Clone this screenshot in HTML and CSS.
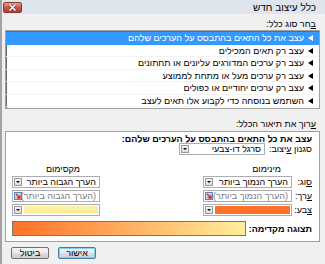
FILE: index.html
```html
<!DOCTYPE html>
<html lang="he">
<head>
    <meta charset="UTF-8">
    <title>כלל עיצוב חדש</title>
    <link rel="stylesheet" href="styles.css">
</head>
<body>
    <div class="dialog" dir="rtl">
        <div class="titlebar">
            <span class="title">כלל עיצוב חדש</span>
            <span class="close-btn">
                <svg width="9" height="7" viewBox="0 0 9 7">
                    <path d="M1.5 0.5 L7.5 6.5 M7.5 0.5 L1.5 6.5" stroke="#6b2a25" stroke-width="2.6"/>
                    <path d="M1.5 0.5 L7.5 6.5 M7.5 0.5 L1.5 6.5" stroke="#fff" stroke-width="1.6"/>
                </svg>
            </span>
        </div>
        <div class="content">
            <div class="section-label"><u>ב</u>חר סוג כלל:</div>
            <ul class="rule-list">
                <li class="selected"><span class="arrow"></span>עצב את כל התאים בהתבסס על הערכים שלהם</li>
                <li><span class="arrow"></span>עצב רק תאים המכילים</li>
                <li><span class="arrow"></span>עצב רק ערכים המדורגים עליונים או תחתונים</li>
                <li><span class="arrow"></span>עצב רק ערכים מעל או מתחת לממוצע</li>
                <li><span class="arrow"></span>עצב רק ערכים יחודיים או כפולים</li>
                <li><span class="arrow"></span>השתמש בנוסחה כדי לקבוע אלו תאים לעצב</li>
            </ul>
            <div class="section-label"><u>ע</u>רוך את תיאור הכלל:</div>
            <div class="desc-box">
                <div class="desc-title">עצב את כל התאים בהתבסס על הערכים שלהם:</div>
                <div class="style-row">
                    <span class="style-label">סגנון <u>ע</u>יצוב:</span>
                    <div class="combo style-combo">
                        <span class="combo-text">סרגל דו-צבעי</span>
                        <span class="drop-btn"></span>
                    </div>
                </div>
                <div class="grid">
                    <span></span>
                    <span class="col-head min-head">מינימום</span>
                    <span></span>
                    <span class="col-head max-head">מקסימום</span>

                    <span class="row-label"><u>ס</u>וג:</span>
                    <div class="combo"><span class="combo-text">הערך הנמוך ביותר</span><span class="drop-btn"></span></div>
                    <span></span>
                    <div class="combo"><span class="combo-text">הערך הגבוה ביותר</span><span class="drop-btn"></span></div>

                    <span class="row-label"><u>ע</u>רך:</span>
                    <div class="combo value-field"><span class="combo-text placeholder">(הערך הנמוך ביותר)</span><span class="ref-btn"><svg width="8" height="8" viewBox="0 0 8 8"><rect x="0.5" y="0.5" width="7" height="7" fill="#dbe8f7" stroke="#5a7fb3"/><path d="M0.5 3 H7.5 M0.5 5.5 H7.5 M3 0.5 V7.5 M5.5 0.5 V7.5" stroke="#8fa9cf" stroke-width="0.6"/><path d="M2 2 L6 6 M6 3.5 V6 H3.5" stroke="#d9261c" stroke-width="1.3" fill="none"/></svg></span></div>
                    <span></span>
                    <div class="combo value-field"><span class="combo-text placeholder">(הערך הגבוה ביותר)</span><span class="ref-btn"><svg width="8" height="8" viewBox="0 0 8 8"><rect x="0.5" y="0.5" width="7" height="7" fill="#dbe8f7" stroke="#5a7fb3"/><path d="M0.5 3 H7.5 M0.5 5.5 H7.5 M3 0.5 V7.5 M5.5 0.5 V7.5" stroke="#8fa9cf" stroke-width="0.6"/><path d="M2 2 L6 6 M6 3.5 V6 H3.5" stroke="#d9261c" stroke-width="1.3" fill="none"/></svg></span></div>

                    <span class="row-label"><u>צ</u>בע:</span>
                    <div class="combo"><span class="swatch min-color"></span><span class="drop-btn"></span></div>
                    <span></span>
                    <div class="combo"><span class="swatch max-color"></span><span class="drop-btn"></span></div>
                </div>
                <div class="preview-row">
                    <span class="preview-label">תצוגה מקדימה:</span>
                    <div class="preview-bar"></div>
                </div>
            </div>
            <div class="buttons">
                <button class="btn default">אישור</button>
                <button class="btn">ביטול</button>
            </div>
        </div>
    </div>
</body>
</html>
```

FILE: styles.css
```css
* {
    box-sizing: border-box;
}
body {
    margin: 0;
    font-family: "Liberation Sans", "DejaVu Sans", sans-serif;
    font-size: 9px;
    color: #000;
    background: #fff;
}
.dialog {
    width: 325px;
    height: 264px;
    background: #f0f0f0;
    border-left: 2px solid #a3a3a3;
    display: flex;
    flex-direction: column;
}
.titlebar {
    height: 14px;
    display: flex;
    align-items: center;
    justify-content: space-between;
    padding: 0 9px 0 1px;
    background: #dfe5ec;
}
.title {
    font-size: 10px;
}
.close-btn {
    width: 19px;
    height: 11px;
    display: flex;
    align-items: center;
    justify-content: center;
    border: 1px solid #8a3a32;
    border-radius: 2px;
    background: linear-gradient(#e3a090, #c8574a 50%, #b9392c);
}
.content {
    flex: 1;
    padding: 5px 5px 0 3px;
}
.section-label {
    height: 11px;
    line-height: 11px;
    padding-right: 4px;
}
.rule-list {
    list-style: none;
    margin: 0;
    padding: 1px 0 2px;
    height: 79px;
    background: #fff;
    border: 1px solid #a0a0a0;
    box-shadow: inset 1px 1px 0 #696969;
}
.rule-list li {
    height: 12.5px;
    line-height: 12.5px;
    padding-right: 6px;
    border-bottom: 1px solid #f3f3f3;
    white-space: nowrap;
}
.rule-list li.selected {
    background: #3399ff;
    color: #fff;
    border-bottom-color: #3399ff;
}
.arrow {
    display: inline-block;
    width: 0;
    height: 0;
    margin-left: 4px;
    border-top: 3px solid transparent;
    border-bottom: 3px solid transparent;
    border-right: 5px solid #000;
}
.selected .arrow {
    border-right-color: #fff;
}
.rule-list + .section-label {
    margin-top: 10px;
}
.desc-box {
    height: 111px;
    margin-top: 1px;
    background: #fff;
    border: 1px solid #a0a0a0;
    padding: 3px 7px 0 6px;
}
.desc-title {
    font-weight: bold;
    line-height: 8px;
    white-space: nowrap;
}
.style-row {
    display: flex;
    align-items: center;
    gap: 4px;
    height: 12px;
}
.style-label {
    white-space: nowrap;
}
.combo {
    height: 12px;
    display: flex;
    align-items: center;
    background: #fff;
    border: 1px solid #abadb3;
    padding: 1px;
}
.style-combo {
    width: 86px;
}
.combo-text {
    flex: 1;
    padding-right: 2px;
    white-space: nowrap;
    overflow: hidden;
}
.placeholder {
    color: #7a7a7a;
}
.drop-btn {
    width: 8px;
    height: 8px;
    border: 1px solid #9a9a9a;
    background: linear-gradient(#f6f6f6, #dcdcdc);
    position: relative;
}
.drop-btn::after {
    content: "";
    position: absolute;
    left: 1px;
    top: 2px;
    border-left: 2px solid transparent;
    border-right: 2px solid transparent;
    border-top: 2px solid #000;
}
.ref-btn {
    width: 8px;
    height: 8px;
    display: flex;
}
.grid {
    display: grid;
    grid-template-columns: 20px 89px 1fr 88px;
    grid-template-rows: 10px 12px 12px 12px;
    row-gap: 2px;
    margin-top: 9px;
    align-items: center;
}
.col-head {
    line-height: 10px;
}
.min-head {
    padding-right: 11px;
}
.max-head {
    padding-right: 20px;
}
.row-label {
    line-height: 12px;
    white-space: nowrap;
}
.swatch {
    flex: 1;
    height: 8px;
    margin-left: 2px;
}
.min-color {
    background: #ff7128;
}
.max-color {
    background: #ffef9c;
}
.preview-row {
    display: flex;
    align-items: center;
    gap: 3px;
    margin-top: 5px;
}
.preview-label {
    font-weight: bold;
    white-space: nowrap;
    flex-shrink: 0;
}
.preview-bar {
    flex: 1;
    height: 15px;
    border: 1px solid #777;
    background: linear-gradient(to left, #ffef9c, #ff7128);
}
.buttons {
    display: flex;
    justify-content: flex-end;
    gap: 9px;
    margin-top: 5px;
    padding-left: 6px;
}
.btn {
    width: 38px;
    height: 12px;
    padding: 0;
    font-family: inherit;
    font-size: 9px;
    line-height: 10px;
    border: 1px solid #707070;
    border-radius: 2px;
    background: linear-gradient(#f2f2f2, #ebebeb 50%, #dddddd 50%, #cfcfcf);
}
.btn.default {
    border-color: #3c7fb1;
    box-shadow: inset 0 0 0 1px #7fd0f4;
}
```
